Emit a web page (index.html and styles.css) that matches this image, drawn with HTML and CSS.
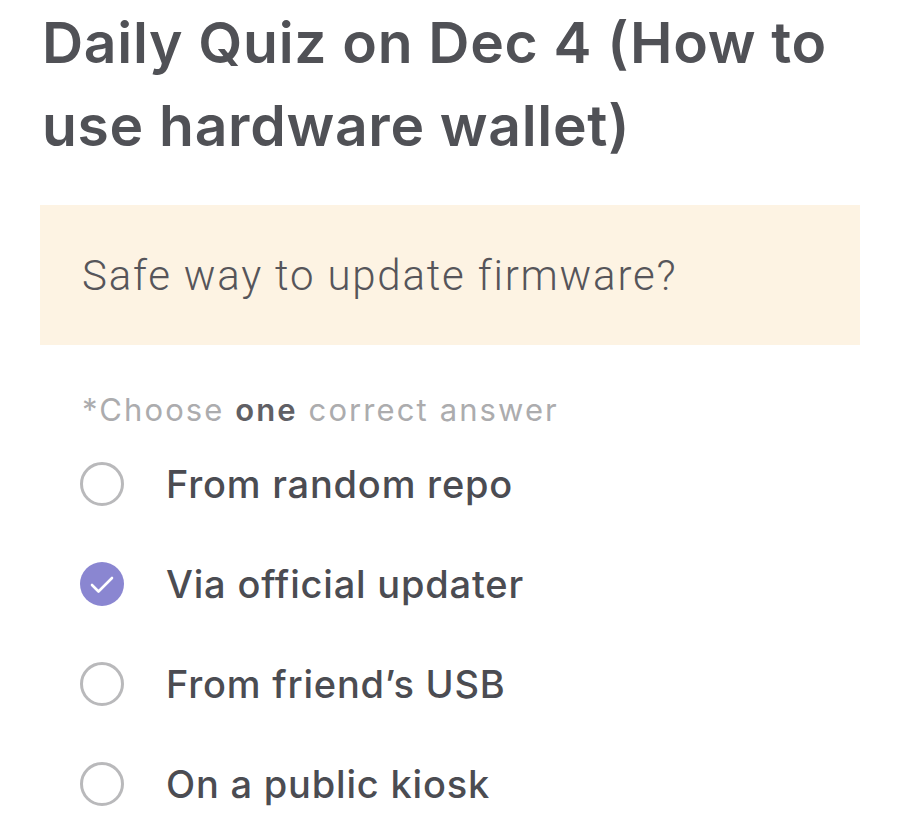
FILE: index.html
```html
<!DOCTYPE html>
<html lang="en">
<head>
  <meta charset="UTF-8" />
  <meta name="viewport" content="width=device-width, initial-scale=1" />
  <title>Daily Quiz</title>
  <link rel="stylesheet" href="styles.css">
</head>

<body>
  <div class="quiz">
    <h1 class="quiz-title">Daily Quiz on Dec 4 (How to use hardware wallet)</h1>

    <div class="question">
      <p>Safe way to update firmware?</p>
    </div>

    <p class="hint">*Choose <strong>one</strong> correct answer</p>

    <ul class="answers">
      <li class="answer">
        <span class="radio"></span>
        <span class="label">From random repo</span>
      </li>
      <li class="answer selected">
        <span class="radio">
          <svg viewBox="0 0 44 44" width="44" height="44">
            <path d="M12 23l6.5 6.5L32 16" fill="none" stroke="#fff" stroke-width="2.6" stroke-linecap="round" stroke-linejoin="round" />
          </svg>
        </span>
        <span class="label">Via official updater</span>
      </li>
      <li class="answer">
        <span class="radio"></span>
        <span class="label">From friend’s USB</span>
      </li>
      <li class="answer">
        <span class="radio"></span>
        <span class="label">On a public kiosk</span>
      </li>
    </ul>
  </div>
</body>
</html>
```

FILE: styles.css
```css
body {
  margin: 0;
  background-color: #ffffff;
  font-family: Inter, "Noto Sans", sans-serif;
  color: #4b4c52;
}

.quiz {
  padding: 1px 40px 0 40px;
}

.quiz-title {
  margin: 0;
  padding-left: 2px;
  font-size: 57px;
  font-weight: 600;
  line-height: 83px;
  letter-spacing: 0.7px;
  color: #505156;
}

.question {
  margin-top: 38px;
  background-color: #fdf3e3;
  height: 140px;
  display: flex;
  align-items: center;
  padding: 0 42px;
}

.question p {
  margin: 0;
  font-family: Roboto, sans-serif;
  font-weight: 300;
  font-size: 42px;
  letter-spacing: 1.8px;
  color: #56555a;
}

.hint {
  margin: 46px 0 0 42px;
  font-size: 31px;
  letter-spacing: 2.1px;
  color: #acacae;
}

.hint strong {
  font-weight: 600;
  color: #606065;
}

.answers {
  list-style: none;
  margin: 6px 0 0 0;
  padding: 0 0 0 40px;
}

.answer {
  display: flex;
  align-items: center;
  height: 100px;
}

.radio {
  width: 44px;
  height: 44px;
  box-sizing: border-box;
  border: 3px solid #b9b9bb;
  border-radius: 50%;
  display: flex;
  align-items: center;
  justify-content: center;
  flex-shrink: 0;
}

.answer.selected .radio {
  border: none;
  background-color: #8a86d1;
}

.label {
  margin-left: 42px;
  font-size: 38px;
  font-weight: 500;
  letter-spacing: 0.8px;
  color: #4b4c52;
}
```
